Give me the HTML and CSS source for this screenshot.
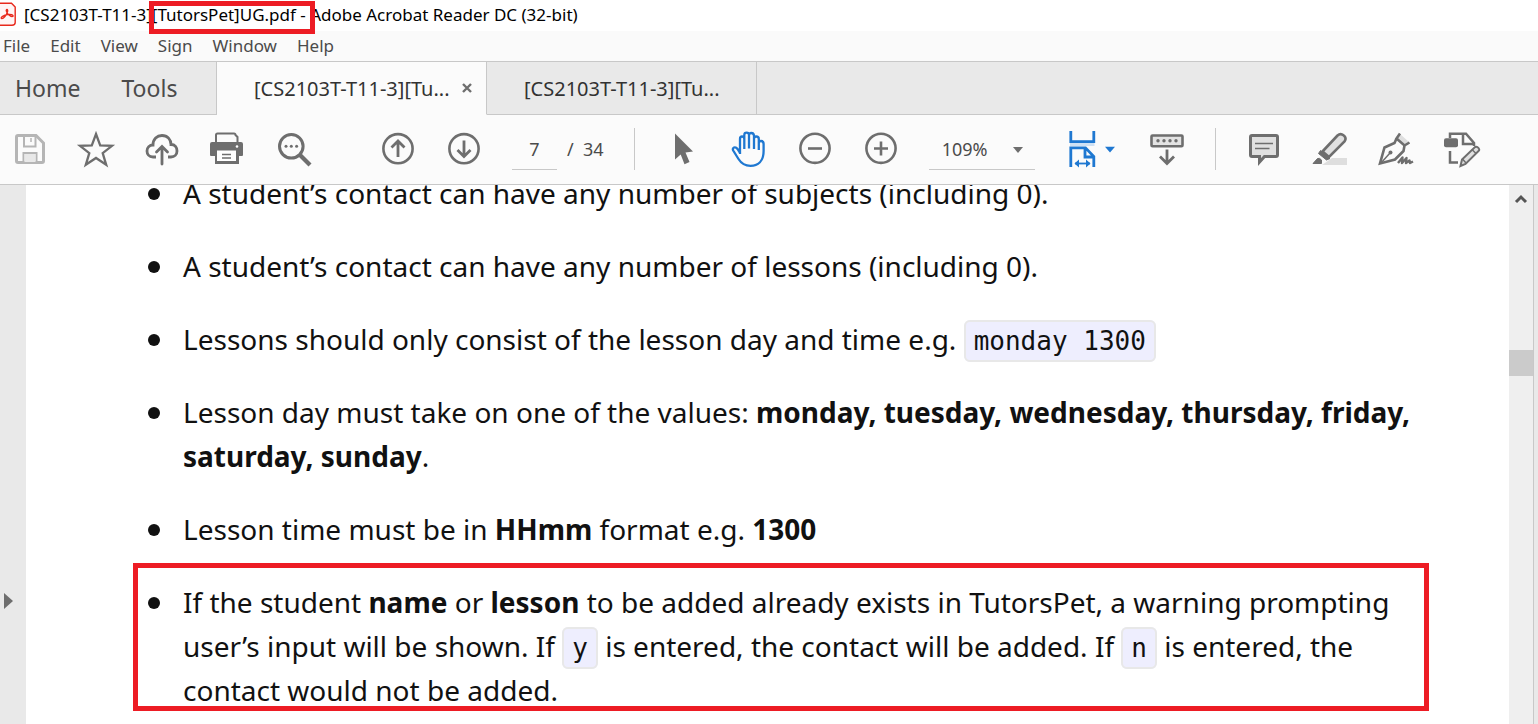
FILE: index.html
```html
<!DOCTYPE html>
<html lang="en">
<head>
<meta charset="utf-8">
<title>[CS2103T-T11-3][TutorsPet]UG.pdf - Adobe Acrobat Reader DC (32-bit)</title>
<link rel="stylesheet" href="styles.css">
</head>
<body>
<header class="titlebar">
  <svg class="app-logo" viewBox="0 0 16 24" aria-hidden="true">
    <path d="M-4 1.2H11.5L15.2 5V20.5Q15.2 23.200 12 23.200H-4" fill="#fff5f5" stroke="#e8291c" stroke-width="1.400"/>
    <path d="M1.500 16.500C0 15.500 4 13 7.500 12.500C11 12 13.500 13 13 14.300C11.500 15.500 6.800 12 6.300 9C6 7 8 7 7.600 9.300C7 12.500 3 17.500 1.500 16.500Z" fill="none" stroke="#e8291c" stroke-width="1.400"/>
  </svg>
  <h1 class="title">[CS2103T-T11-3<span class="marked">][TutorsPet]UG.pdf -</span> Adobe Acrobat Reader DC (32-bit)</h1>
</header>
<nav class="menubar" aria-label="Menu">
  <button>File</button><button>Edit</button><button>View</button><button>Sign</button><button>Window</button><button>Help</button>
</nav>
<nav class="tabs" aria-label="Tabs">
  <div class="tab-main"><button>Home</button><button>Tools</button></div>
  <div class="tab active"><button class="tab-name">[CS2103T-T11-3][Tu...</button>
    <button class="close" aria-label="Close tab"><svg viewBox="0 0 10 10"><path d="M1 1L9 9M9 1L1 9"/></svg></button></div>
  <div class="tab"><button class="tab-name">[CS2103T-T11-3][Tu...</button></div>
</nav>
<div class="toolbar" role="toolbar" aria-label="Tools">
  <button class="tool" aria-label="Save" disabled><svg class="pale" viewBox="0 0 36 36"><path d="M4.500 5Q4.500 3.500 6 3.500H24L31.500 11V29Q31.500 30.500 30 30.500H6Q4.500 30.500 4.500 29Z" stroke-width="3"/><path d="M12 4V14.500H23.500V4M11.500 30V21H24.500V30" stroke-width="2"/><path d="M12.500 22H23.500V30H12.500Z" fill="#e8e8e8" stroke="none"/><path d="M19 6V10" stroke-width="1.500"/></svg></button>
  <button class="tool" aria-label="Star"><svg viewBox="0 0 36 36"><path d="M18 2L22.200 13.400L34 13.800L24.700 21.200L28.200 32.800L18 26L7.800 32.800L11.300 21.200L2 13.800L13.800 13.400Z" stroke-width="2.300"/></svg></button>
  <button class="tool" aria-label="Upload"><svg viewBox="0 0 36 36"><path d="M12 25H9C5 25 3 22 3 19C3 15.500 5.500 13 9 13C9 7 13 3.500 18 3.500C23.500 3.500 27 7.500 27 12.500C31 12.500 33 15.500 33 19C33 22.500 30.500 25 27 25H24" stroke-width="2.800"/><path d="M18 32V15M12.500 20L18 14.500L23.500 20" stroke-width="2.800" stroke-linecap="round"/></svg></button>
  <button class="tool" aria-label="Print"><svg viewBox="0 0 36 36"><path d="M6 12V3Q6 1.500 7.500 1.500H24Q25.500 1.500 25.500 3L27.500 5V12" stroke-width="2"/><path d="M2 10H31Q33 10 33 12V23Q33 24 32 24H1Q0 24 0 23V12Q0 10 2 10ZM5 24H29V32H5Z" fill="#6e6e6e" stroke="none"/><path d="M7 18.500H26V29H7Z" fill="#fff" stroke="none"/><path d="M12 22.500H21M12 26H21" stroke-width="1.300"/><circle cx="27" cy="14.500" r="1.300" fill="#fff" stroke="none"/></svg></button>
  <button class="tool" aria-label="Find"><svg viewBox="0 0 36 36"><circle cx="15.300" cy="14.300" r="11.800" stroke-width="3"/><path d="M24 23L34 33" stroke-width="4.200"/><g fill="#6e6e6e" stroke="none"><circle cx="10" cy="14.300" r="1.500"/><circle cx="15.300" cy="14.300" r="1.500"/><circle cx="20.600" cy="14.300" r="1.500"/></g></svg></button>
  <span class="spacer"></span>
  <button class="tool" aria-label="Previous page"><svg viewBox="0 0 36 36"><circle cx="18" cy="16.700" r="14.600" stroke-width="2.600"/><path d="M18 25V9.500M11.500 15.500L18 9L24.500 15.500" stroke-width="2.800"/></svg></button>
  <button class="tool" aria-label="Next page"><svg viewBox="0 0 36 36"><circle cx="18" cy="16.700" r="14.600" stroke-width="2.600"/><path d="M18 8.500V24M11.500 18L18 24.500L24.500 18" stroke-width="2.800"/></svg></button>
  <div class="pages"><input class="page-input" aria-label="Page number" value="7"><span>/&nbsp; 34</span></div>
  <span class="rule"></span>
  <button class="tool" aria-label="Select"><svg viewBox="0 0 36 36"><path d="M10 1.500L28 19.500L20.500 20.500L24.500 30L19.500 32.300L15.700 22.500L10 27.500Z" fill="#6e6e6e" stroke="none"/></svg></button>
  <button class="tool" aria-label="Hand"><svg class="blue" viewBox="0 0 36 36"><path d="M9 22V7Q9 4.500 11 4.500Q13.300 4.500 13.300 7V17M13.300 17V3Q13.300 .7 15.600 .7T18 3V16.500M18 16.500V3Q18 1 20.300 1T23 3.500V17M23 17V7Q23 4.500 25.200 4.500Q27.800 4.500 27.800 7V18M27.800 18V11Q27.800 9 30 9Q32.600 9 32.600 12V19C32.600 29 27 33.800 19.500 33.800C13 33.800 10 31 7.500 27L2.200 18.500Q1.200 16.500 3 15.500Q5 14.800 6.500 17L9 21" stroke-width="2.300"/></svg></button>
  <button class="tool" aria-label="Zoom out"><svg viewBox="0 0 36 36"><circle cx="18" cy="16.300" r="14.600" stroke-width="2.600"/><path d="M11 16.500H25" stroke-width="2.600"/></svg></button>
  <button class="tool" aria-label="Zoom in"><svg viewBox="0 0 36 36"><circle cx="18" cy="16.300" r="14.600" stroke-width="2.600"/><path d="M11 16.500H25M18 9.500V23.500" stroke-width="2.600"/></svg></button>
  <div class="zoom"><select class="zoom-select" aria-label="Zoom level"><option>109%</option></select><svg class="caret" viewBox="0 0 10 6"><path d="M0 0H10L5 6Z"/></svg></div>
  <button class="tool wide" aria-label="Fit width"><svg class="blue" viewBox="0 0 54 36"><path d="M5 8.500H29.500V14H5Z" fill="#cfe1f4" stroke="none"/><path d="M5.800 -1V9.700H28.800V-1" stroke-width="2.800"/><path d="M5.800 35V15.800H20.500L28.800 24.500V35M20 16V25H28.800" stroke-width="2.800"/><path d="M10 31.500H25" stroke-width="1.800"/><path d="M9.500 31.500L14 27.500V35.500ZM25.500 31.500L21 27.500V35.500ZM40 14.700H50L45 20.500Z" fill="#1f78d1" stroke="none"/></svg></button>
  <button class="tool" aria-label="Scroll mode"><svg viewBox="0 0 36 36"><rect x="2.500" y="3.500" width="31" height="10.800" rx="1" fill="#e3e3e3" stroke-width="2.600"/><g fill="#6e6e6e" stroke="none"><circle cx="9" cy="8.700" r="1.700"/><circle cx="15" cy="8.700" r="1.700"/><circle cx="21" cy="8.700" r="1.700"/><circle cx="27" cy="8.700" r="1.700"/></g><path d="M18 17.500V31M11 24.500L18 31.500L25 24.500" stroke-width="2.800"/></svg></button>
  <span class="rule"></span>
  <button class="tool" aria-label="Comment"><svg viewBox="0 0 36 36"><path d="M6 3.500H30Q31.500 3.500 31.500 5V23Q31.500 24.500 30 24.500H18.500L13.500 30V24.500H6Q4.500 24.500 4.500 23V5Q4.500 3.500 6 3.500Z" fill="#e0e0e0" stroke-width="3"/><path d="M9 11.500H27M9 16.500H23.500" stroke-width="1.400"/></svg></button>
  <button class="tool" aria-label="Highlight"><svg viewBox="0 0 36 36"><path d="M10 33L20 26H35V33Z" fill="#dedede" stroke="none"/><path d="M10.500 19.500L25.500 3.500Q28.500 0.800 31.500 3.300Q35 6 32.500 9.500L17 25Z" fill="#e0e0e0" stroke-width="2.600"/><path d="M8.500 18.500L18 26.500L14.500 28L6.500 21.500ZM1 31.500L5.500 26.500Q7.500 25.500 9.500 28V31.500Z" fill="#6e6e6e" stroke-width="1"/></svg></button>
  <button class="tool" aria-label="Sign document"><svg viewBox="0 0 36 36"><path d="M22 2L31 10L27 13.500L18.500 6Z" fill="#dedede" stroke="none"/><path d="M22 1.500L18.500 6.500L26.500 13.500L31.500 10.500M18.500 6.500L16.500 11L6.500 15.500L2 31.500L17 27.500L25.500 19L26.500 13.500" stroke-width="2.600"/><path d="M3 31L12 21" stroke-width="1.500"/><circle cx="12.500" cy="20.500" r="2" fill="#6e6e6e" stroke="none"/><path d="M20 31L24.500 25.500L24 31L28.500 26L28 31L31.500 28.500L32 31L35 29.500" stroke-width="2.400" stroke-linejoin="round"/></svg></button>
  <button class="tool" aria-label="Edit PDF"><svg viewBox="0 0 36 36"><path d="M6 6V1.800H22L30 11V14M19 2V12H29" stroke-width="2.500"/><rect x="0" y="6.300" width="14" height="9" rx="2" fill="#6e6e6e" stroke="none"/><path d="M6 19V30.500H14" stroke-width="2.500"/><path d="M16.500 34L18 27.500L31 15Q33 14 34.500 16T34.500 19L21.500 32Z" fill="#e0e0e0" stroke-width="2"/><path d="M18.500 27L22 31M28 17.500L32 21.500" stroke-width="1.500"/></svg></button>
</div>
<div class="workspace">
  <aside class="side"><button class="expand" aria-label="Show navigation pane"><svg viewBox="0 0 10 16"><path d="M0 0L9 8L0 16Z" fill="#6e6e6e"/></svg></button></aside>
  <main class="document">
    <ul class="notes">
      <li>A student’s contact can have any number of subjects (including 0).</li>
      <li>A student’s contact can have any number of lessons (including 0).</li>
      <li>Lessons should only consist of the lesson day and time e.g. <code>monday 1300</code></li>
      <li>Lesson day must take on one of the values: <b>monday, tuesday, wednesday, thursday, friday,<br>saturday, sunday</b>.</li>
      <li>Lesson time must be in <b>HHmm</b> format e.g. <b>1300</b></li>
      <li class="boxed">If the student <b>name</b> or <b>lesson</b> to be added already exists in TutorsPet, a warning prompting<br>user’s input will be shown. If <code>y</code> is entered, the contact will be added. If <code>n</code> is entered, the<br>contact would not be added.</li>
    </ul>
  </main>
  <div class="scrollbar"><button class="scroll-up" aria-label="Scroll up"><svg viewBox="0 0 12 10"><path d="M1 8L6 3L11 8" fill="none" stroke="#555" stroke-width="3"/></svg></button><div class="thumb"></div></div>
</div>
</body>
</html>
```
FILE: styles.css
```css
* { box-sizing: border-box; }
body {
  margin: 0;
  height: 100vh;
  overflow: hidden;
  display: flex;
  flex-direction: column;
  background: #fff;
  font-family: "Noto Sans", "Open Sans", sans-serif;
  color: #4b4b4b;
}
button, input, select {
  font: inherit;
  color: inherit;
  background: none;
  border: 0;
  padding: 0;
  margin: 0;
}
svg { display: block; overflow: visible; }

.titlebar { display: flex; align-items: center; gap: 8px; height: 31px; flex: none; }
.app-logo { width: 16px; height: 24px; margin-bottom: 4px; overflow: hidden; }
.title { margin: 0; font-size: 17px; line-height: 28px; height: 30px; font-weight: 400; color: #000; white-space: nowrap; }
.marked { position: relative; }
.marked::after {
  content: "";
  position: absolute;
  inset: -2px -9px -8px 3px;
  border: 5px solid #ed1c24;
}

.menubar { display: flex; gap: 20px; height: 30px; padding-left: 3px; background: #fafafa; flex: none; font-size: 17px; line-height: 30px; }

.tabs { display: flex; height: 54px; flex: none; background: #e9e9e9; border-top: 1px solid #c8c8c8; }
.tabs::after { content: ""; flex: 1; border-bottom: 1px solid #c8c8c8; }
.tab-main { display: flex; gap: 41px; width: 217px; padding-left: 15px; font-size: 23px; border-right: 1px solid #c8c8c8; border-bottom: 1px solid #c8c8c8; }
.tab { display: flex; align-items: center; gap: 12px; width: 270px; padding-left: 37px; font-size: 20px; color: #323232; border-right: 1px solid #c8c8c8; border-bottom: 1px solid #c8c8c8; }
.tab.active { background: #fbfbfb; border-bottom-color: #fbfbfb; }
.close { width: 10px; }
.close path { stroke: #6e6e6e; stroke-width: 2.4; }

.toolbar { display: flex; align-items: flex-start; gap: 30px; height: 70px; padding: 17px 12px; flex: none; background: #fbfbfb; border-bottom: 1px solid #c8c8c8; }
.tool { width: 36px; height: 36px; flex: none; }
.tool.wide { width: 54px; }
.tool svg { width: 100%; height: 36px; fill: none; stroke: #6e6e6e; }
.tool .blue { stroke: #1f78d1; }
.tool .pale { stroke: #b5b5b5; }
.spacer { width: 8px; flex: none; }
.pages { display: flex; gap: 10px; font-size: 18px; line-height: 34px; white-space: nowrap; }
.page-input { width: 45px; height: 38px; padding-bottom: 3px; text-align: center; border-bottom: 1px solid #c8c8c8; }
.rule { width: 1px; height: 42px; margin-top: -4px; background: #c8c8c8; flex: none; }
.zoom { position: relative; width: 106px; flex: none; }
.zoom-select { width: 100%; height: 38px; padding: 0 0 3px 13px; font-size: 18px; appearance: none; border-bottom: 1px solid #c8c8c8; }
.caret { position: absolute; right: 12px; top: 15px; width: 10px; height: 6px; fill: #6e6e6e; pointer-events: none; }

.workspace { display: flex; flex: 1; min-height: 0; background: #fff; }
.side { display: flex; width: 26px; flex: none; background: #e9e9e9; padding-left: 4px; }
.expand { width: 10px; height: 16px; margin-top: 408px; }
.document { flex: 1; overflow: hidden; padding-left: 157px; }
.notes { margin: -14px 0 0; padding: 0; list-style: none; font-size: 28px; line-height: 44px; color: #111; white-space: nowrap; }
.notes li { position: relative; margin-bottom: 29px; }
.notes li::before { content: ""; position: absolute; left: -35px; top: 17px; width: 12px; height: 12px; border-radius: 50%; background: #111; }
.notes code { padding: 4px 8px; font-family: "DejaVu Sans Mono", monospace; font-size: 26px; line-height: 1; background: #eeeefe; border: 2px solid #e8e8e8; border-radius: 6px; }
.boxed::after { content: ""; position: absolute; left: -50px; right: 80px; top: -17px; bottom: 1px; border: 5px solid #ed1c24; }
.scrollbar { width: 29px; flex: none; background: #efefef; box-shadow: inset -4px 0 #e9e9e9, inset -5px 0 #c8c8c8; }
.scroll-up { display: flex; justify-content: center; width: 24px; height: 20px; padding-top: 9px; }
.scroll-up svg { width: 12px; height: 10px; }
.thumb { width: 24px; height: 26px; margin-top: 145px; background: #cbcbcb; }
```
